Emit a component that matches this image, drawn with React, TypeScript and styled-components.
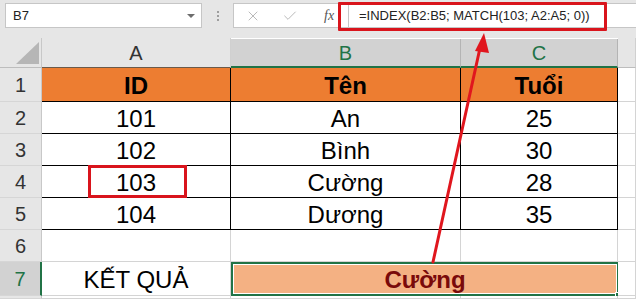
import React from 'react';
import styled, { createGlobalStyle } from 'styled-components';
import { X, Check } from 'lucide-react';

const GlobalStyle = createGlobalStyle`
  html, body {
    margin: 0;
    padding: 0;
    background: #ffffff;
  }
  * {
    box-sizing: border-box;
  }
`;

const EXCEL_GREEN = '#217346';
const GRID_LINE = '#d4d4d4';
const HEADER_BG = '#e6e6e6';
const HEADER_SELECTED = '#d2d2d2';
const MARK_RED = '#d9141c';

const Page = styled.div`
  position: relative;
  width: 636px;
  height: 303px;
  overflow: hidden;
  font-family: "Liberation Sans", Arial, sans-serif;
  color: #000;
  background: #fff;
`;

const Toolbar = styled.div`
  display: flex;
  align-items: flex-start;
  height: 38px;
  padding: 3px 0 0 5px;
  background: ${HEADER_BG};
`;

const NameBox = styled.div`
  display: flex;
  align-items: center;
  justify-content: space-between;
  width: 197px;
  height: 25px;
  padding: 0 6px 0 7px;
  background: #fff;
  border: 1px solid #c6c6c6;
  font-size: 13px;
  color: #222;
`;

const DropArrow = styled.span`
  width: 0;
  height: 0;
  border-left: 4px solid transparent;
  border-right: 4px solid transparent;
  border-top: 4px solid #6d6d6d;
`;

const Grip = styled.div`
  display: flex;
  flex-direction: column;
  gap: 2px;
  width: 31px;
  height: 25px;
  align-items: center;
  justify-content: center;
`;

const GripDot = styled.span`
  width: 2px;
  height: 2px;
  background: #9e9e9e;
`;

const FormulaBar = styled.div`
  position: relative;
  display: flex;
  align-items: center;
  flex: 1;
  height: 25px;
  background: #fff;
  border: 1px solid #c6c6c6;
  border-right: none;
`;

const BarButton = styled.span`
  display: flex;
  align-items: center;
  justify-content: center;
  width: 37px;
  height: 23px;
  color: #b4b4b4;
`;

const FxLabel = styled.span`
  width: 40px;
  padding-left: 16px;
  font-family: "Liberation Serif", "Times New Roman", serif;
  font-style: italic;
  font-size: 14px;
  color: #555;
`;

const BarDivider = styled.span`
  width: 1px;
  height: 23px;
  background: #c6c6c6;
`;

const FormulaText = styled.span`
  padding-left: 10px;
  font-size: 13px;
  color: #222;
  white-space: nowrap;
`;

const Highlight = styled.div`
  position: absolute;
  left: 104px;
  top: -2px;
  width: 269px;
  height: 29px;
  border: 3px solid ${MARK_RED};
  border-radius: 1px;
`;

const Sheet = styled.div`
  display: grid;
  grid-template-columns: 42px 189px 230px 157px 1fr;
  grid-template-rows: 30px 34px 32px 32px 32px 32px 32px 34px 1fr;
`;

const Corner = styled.div`
  display: flex;
  align-items: flex-end;
  justify-content: flex-end;
  padding: 0 2px 3px 0;
  background: ${HEADER_BG};
  border-right: 1px solid #c8c8c8;
  border-bottom: 1px solid #bdbdbd;
`;

const CornerTriangle = styled.span`
  width: 0;
  height: 0;
  border-left: 23px solid transparent;
  border-bottom: 22px solid #b6b6b6;
`;

const ColHeader = styled.div<{ $selected?: boolean; $dark?: boolean }>`
  display: flex;
  align-items: center;
  justify-content: center;
  padding-top: 2px;
  font-size: 20px;
  background: ${p => (p.$selected ? HEADER_SELECTED : HEADER_BG)};
  color: ${p => (p.$selected ? EXCEL_GREEN : '#333')};
  border-right: 1px solid ${p => (p.$selected ? '#b4b4b4' : '#d0d0d0')};
  border-bottom: ${p => (p.$selected ? `2px solid ${EXCEL_GREEN}` : `1px solid ${p.$dark ? '#6b5a4a' : '#bdbdbd'}`)};
  margin-top: ${p => (p.$selected ? '1px' : '0')};
`;

const RowHeader = styled.div<{ $selected?: boolean }>`
  display: flex;
  align-items: center;
  justify-content: center;
  padding-top: 2px;
  font-size: 20px;
  background: ${p => (p.$selected ? HEADER_SELECTED : HEADER_BG)};
  color: ${p => (p.$selected ? EXCEL_GREEN : '#333')};
  border-right: ${p => (p.$selected ? `2px solid ${EXCEL_GREEN}` : '1px solid #c8c8c8')};
  border-bottom: 1px solid #d6d6d6;
`;

const Cell = styled.div<{ $fill?: string; $bold?: boolean; $table?: boolean }>`
  position: relative;
  display: flex;
  align-items: center;
  justify-content: center;
  padding-top: 2px;
  font-size: 24px;
  font-weight: ${p => (p.$bold ? 700 : 400)};
  background: ${p => p.$fill || '#fff'};
  border-right: 1px solid ${p => (p.$table ? '#000' : GRID_LINE)};
  border-bottom: 1px solid ${p => (p.$table ? '#000' : GRID_LINE)};
`;

const ResultCell = styled.div`
  position: relative;
  grid-column: span 2;
  display: flex;
  align-items: center;
  justify-content: center;
  padding-top: 2px;
  font-size: 24px;
  font-weight: 700;
  color: #7a0a0a;
  background: #f4b183;
  border: 2px solid ${EXCEL_GREEN};
  box-shadow: inset 0 0 0 1px #fff;
  margin-right: -1px;
`;

const FillHandle = styled.span`
  position: absolute;
  right: -4px;
  bottom: -4px;
  width: 6px;
  height: 6px;
  background: ${EXCEL_GREEN};
  border: 1px solid #fff;
`;

const CellMark = styled.div`
  position: absolute;
  left: 46px;
  top: -1px;
  width: 99px;
  height: 33px;
  border: 3px solid ${MARK_RED};
`;

const Pointer = styled.svg`
  position: absolute;
  left: 0;
  top: 0;
  pointer-events: none;
`;

const HEADER_ROW = ['ID', 'Tên', 'Tuổi'];
const DATA_ROWS = [
  ['101', 'An', '25'],
  ['102', 'Bình', '30'],
  ['103', 'Cường', '28'],
  ['104', 'Dương', '35'],
];

export default function App() {
  return (
    <Page>
      <GlobalStyle />
      <Toolbar>
        <NameBox>
          <span>B7</span>
          <DropArrow />
        </NameBox>
        <Grip>
          <GripDot />
          <GripDot />
          <GripDot />
        </Grip>
        <FormulaBar>
          <BarButton><X size={16} strokeWidth={1.4} /></BarButton>
          <BarButton><Check size={16} strokeWidth={1.4} /></BarButton>
          <FxLabel>fx</FxLabel>
          <BarDivider />
          <FormulaText>=INDEX(B2:B5; MATCH(103; A2:A5; 0))</FormulaText>
          <Highlight />
        </FormulaBar>
      </Toolbar>

      <Sheet>
        {/* column headers */}
        <Corner><CornerTriangle /></Corner>
        <ColHeader $dark>A</ColHeader>
        <ColHeader $selected>B</ColHeader>
        <ColHeader $selected>C</ColHeader>
        <ColHeader />

        {/* row 1: table header */}
        <RowHeader>1</RowHeader>
        {HEADER_ROW.map(text => (
          <Cell key={text} $table $bold $fill="#ed7d31">{text}</Cell>
        ))}
        <Cell />

        {/* rows 2-5: data */}
        {DATA_ROWS.map((row, i) => (
          <React.Fragment key={row[0]}>
            <RowHeader>{i + 2}</RowHeader>
            {row.map((value, j) => (
              <Cell key={j} $table>
                {value}
                {i === 2 && j === 0 && <CellMark />}
              </Cell>
            ))}
            <Cell />
          </React.Fragment>
        ))}

        {/* row 6: empty */}
        <RowHeader>6</RowHeader>
        <Cell />
        <Cell />
        <Cell />
        <Cell />

        {/* row 7: result */}
        <RowHeader $selected>7</RowHeader>
        <Cell>KẾT QUẢ</Cell>
        <ResultCell>
          Cường
          <FillHandle />
        </ResultCell>
        <Cell />

        {/* row 8: only its top edge shows */}
        <RowHeader />
        <Cell />
        <Cell />
        <Cell />
        <Cell />
      </Sheet>

      <Pointer width="636" height="303" viewBox="0 0 636 303">
        <line x1="433" y1="262" x2="480" y2="48" stroke="#e0161e" strokeWidth="3" strokeLinecap="round" />
        <polygon points="484,33 475,51 489,53" fill="#e0161e" />
      </Pointer>
    </Page>
  );
}
